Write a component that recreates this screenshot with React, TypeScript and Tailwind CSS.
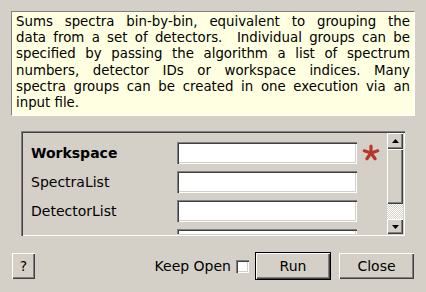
import React from "react";

const raised =
  "shadow-[inset_1px_1px_0_#ffffff,inset_-1px_-1px_0_#404040,inset_-2px_-2px_0_#808080]";
const sunken =
  "shadow-[inset_1px_1px_0_#808080,inset_2px_2px_0_#404040,inset_-1px_-1px_0_#ffffff,inset_-2px_-2px_0_#d4d0c8]";

const lines = [
  "Sums spectra bin-by-bin, equivalent to grouping the",
  "data from a set of detectors.  Individual groups can be",
  "specified by passing the algorithm a list of spectrum",
  "numbers, detector IDs or workspace indices. Many",
  "spectra groups can be created in one execution via an",
];

function Row({ label, bold, star }: { label: string; bold?: boolean; star?: boolean }) {
  return (
    <div className="flex h-[22px] shrink-0 items-center">
      <div className={`w-[146px] shrink-0 text-[14px] text-black ${bold ? "font-bold" : ""}`}>{label}</div>
      <div className={`h-[22px] w-[180px] shrink-0 bg-white ${sunken}`} />
      {star && (
        <svg width="20" height="20" viewBox="0 0 20 20" className="ml-[4px]">
          <g stroke="#b8392c" strokeWidth="3.2" strokeLinecap="round">
            <line x1="10" y1="10" x2="10" y2="3" />
            <line x1="10" y1="10" x2="16.7" y2="7.8" />
            <line x1="10" y1="10" x2="14.1" y2="15.7" />
            <line x1="10" y1="10" x2="5.9" y2="15.7" />
            <line x1="10" y1="10" x2="3.3" y2="7.8" />
          </g>
        </svg>
      )}
    </div>
  );
}

export default function App() {
  return (
    <div
      className="relative h-[292px] w-[426px] overflow-hidden bg-[#d4d0c8] text-black"
      style={{ fontFamily: "'DejaVu Sans', sans-serif" }}
    >
      <div className="flex flex-col pt-[11px]">
        <div className="ml-[11px] h-[105px] w-[404px] border-l border-t border-b border-r border-l-[#808080] border-t-[#808080] border-r-[#ffffff] border-b-[#ffffff] bg-[#ffffe1] px-[4px] pt-[2px] text-[13.33px] leading-[16.2px]">
          {lines.map((l, i) => (
            <div key={i} className="whitespace-pre text-justify [text-align-last:justify]">
              {l}
            </div>
          ))}
          <div>input file.</div>
        </div>

        <div className={`ml-[21px] mt-[15px] flex h-[105px] w-[384px] p-[2px] ${sunken}`}>
          <div className="flex flex-1 flex-col gap-[7px] overflow-hidden pl-[8px] pt-[9px]">
            <Row label="Workspace" bold star />
            <Row label="SpectraList" />
            <Row label="DetectorList" />
            <Row label="WorkspaceIndexList" />
          </div>
          <div className="flex w-[16px] flex-col">
            <div className={`flex h-[16px] items-center justify-center bg-[#d4d0c8] ${raised}`}>
              <svg width="7" height="4" viewBox="0 0 7 4">
                <polygon points="3.5,0 7,4 0,4" fill="#000" />
              </svg>
            </div>
            <div className={`h-[55px] bg-[#d4d0c8] ${raised}`} />
            <div className="flex-1 bg-[repeating-conic-gradient(#ffffff_0_25%,#d4d0c8_0_50%)] bg-[length:2px_2px]" />
            <div className={`flex h-[15px] items-center justify-center bg-[#d4d0c8] ${raised}`}>
              <svg width="7" height="4" viewBox="0 0 7 4">
                <polygon points="0,0 7,0 3.5,4" fill="#000" />
              </svg>
            </div>
          </div>
        </div>

        <div className="mt-[16px] flex h-[28px] items-center pl-[12px] pr-[12px]">
          <div className={`flex h-[26px] w-[23px] items-center justify-center text-[14px] ${raised}`}>?</div>
          <div className="flex-1" />
          <div className="text-[14px]">Keep Open</div>
          <div className={`ml-[5px] h-[13px] w-[13px] bg-white ${sunken}`} />
          <div className="ml-[6px] h-[28px] w-[76px] border border-black">
            <div className={`flex h-full w-full items-center justify-center text-[14px] ${raised}`}>Run</div>
          </div>
          <div className={`ml-[8px] flex h-[26px] w-[75px] items-center justify-center text-[14px] ${raised}`}>
            Close
          </div>
        </div>
      </div>
    </div>
  );
}
